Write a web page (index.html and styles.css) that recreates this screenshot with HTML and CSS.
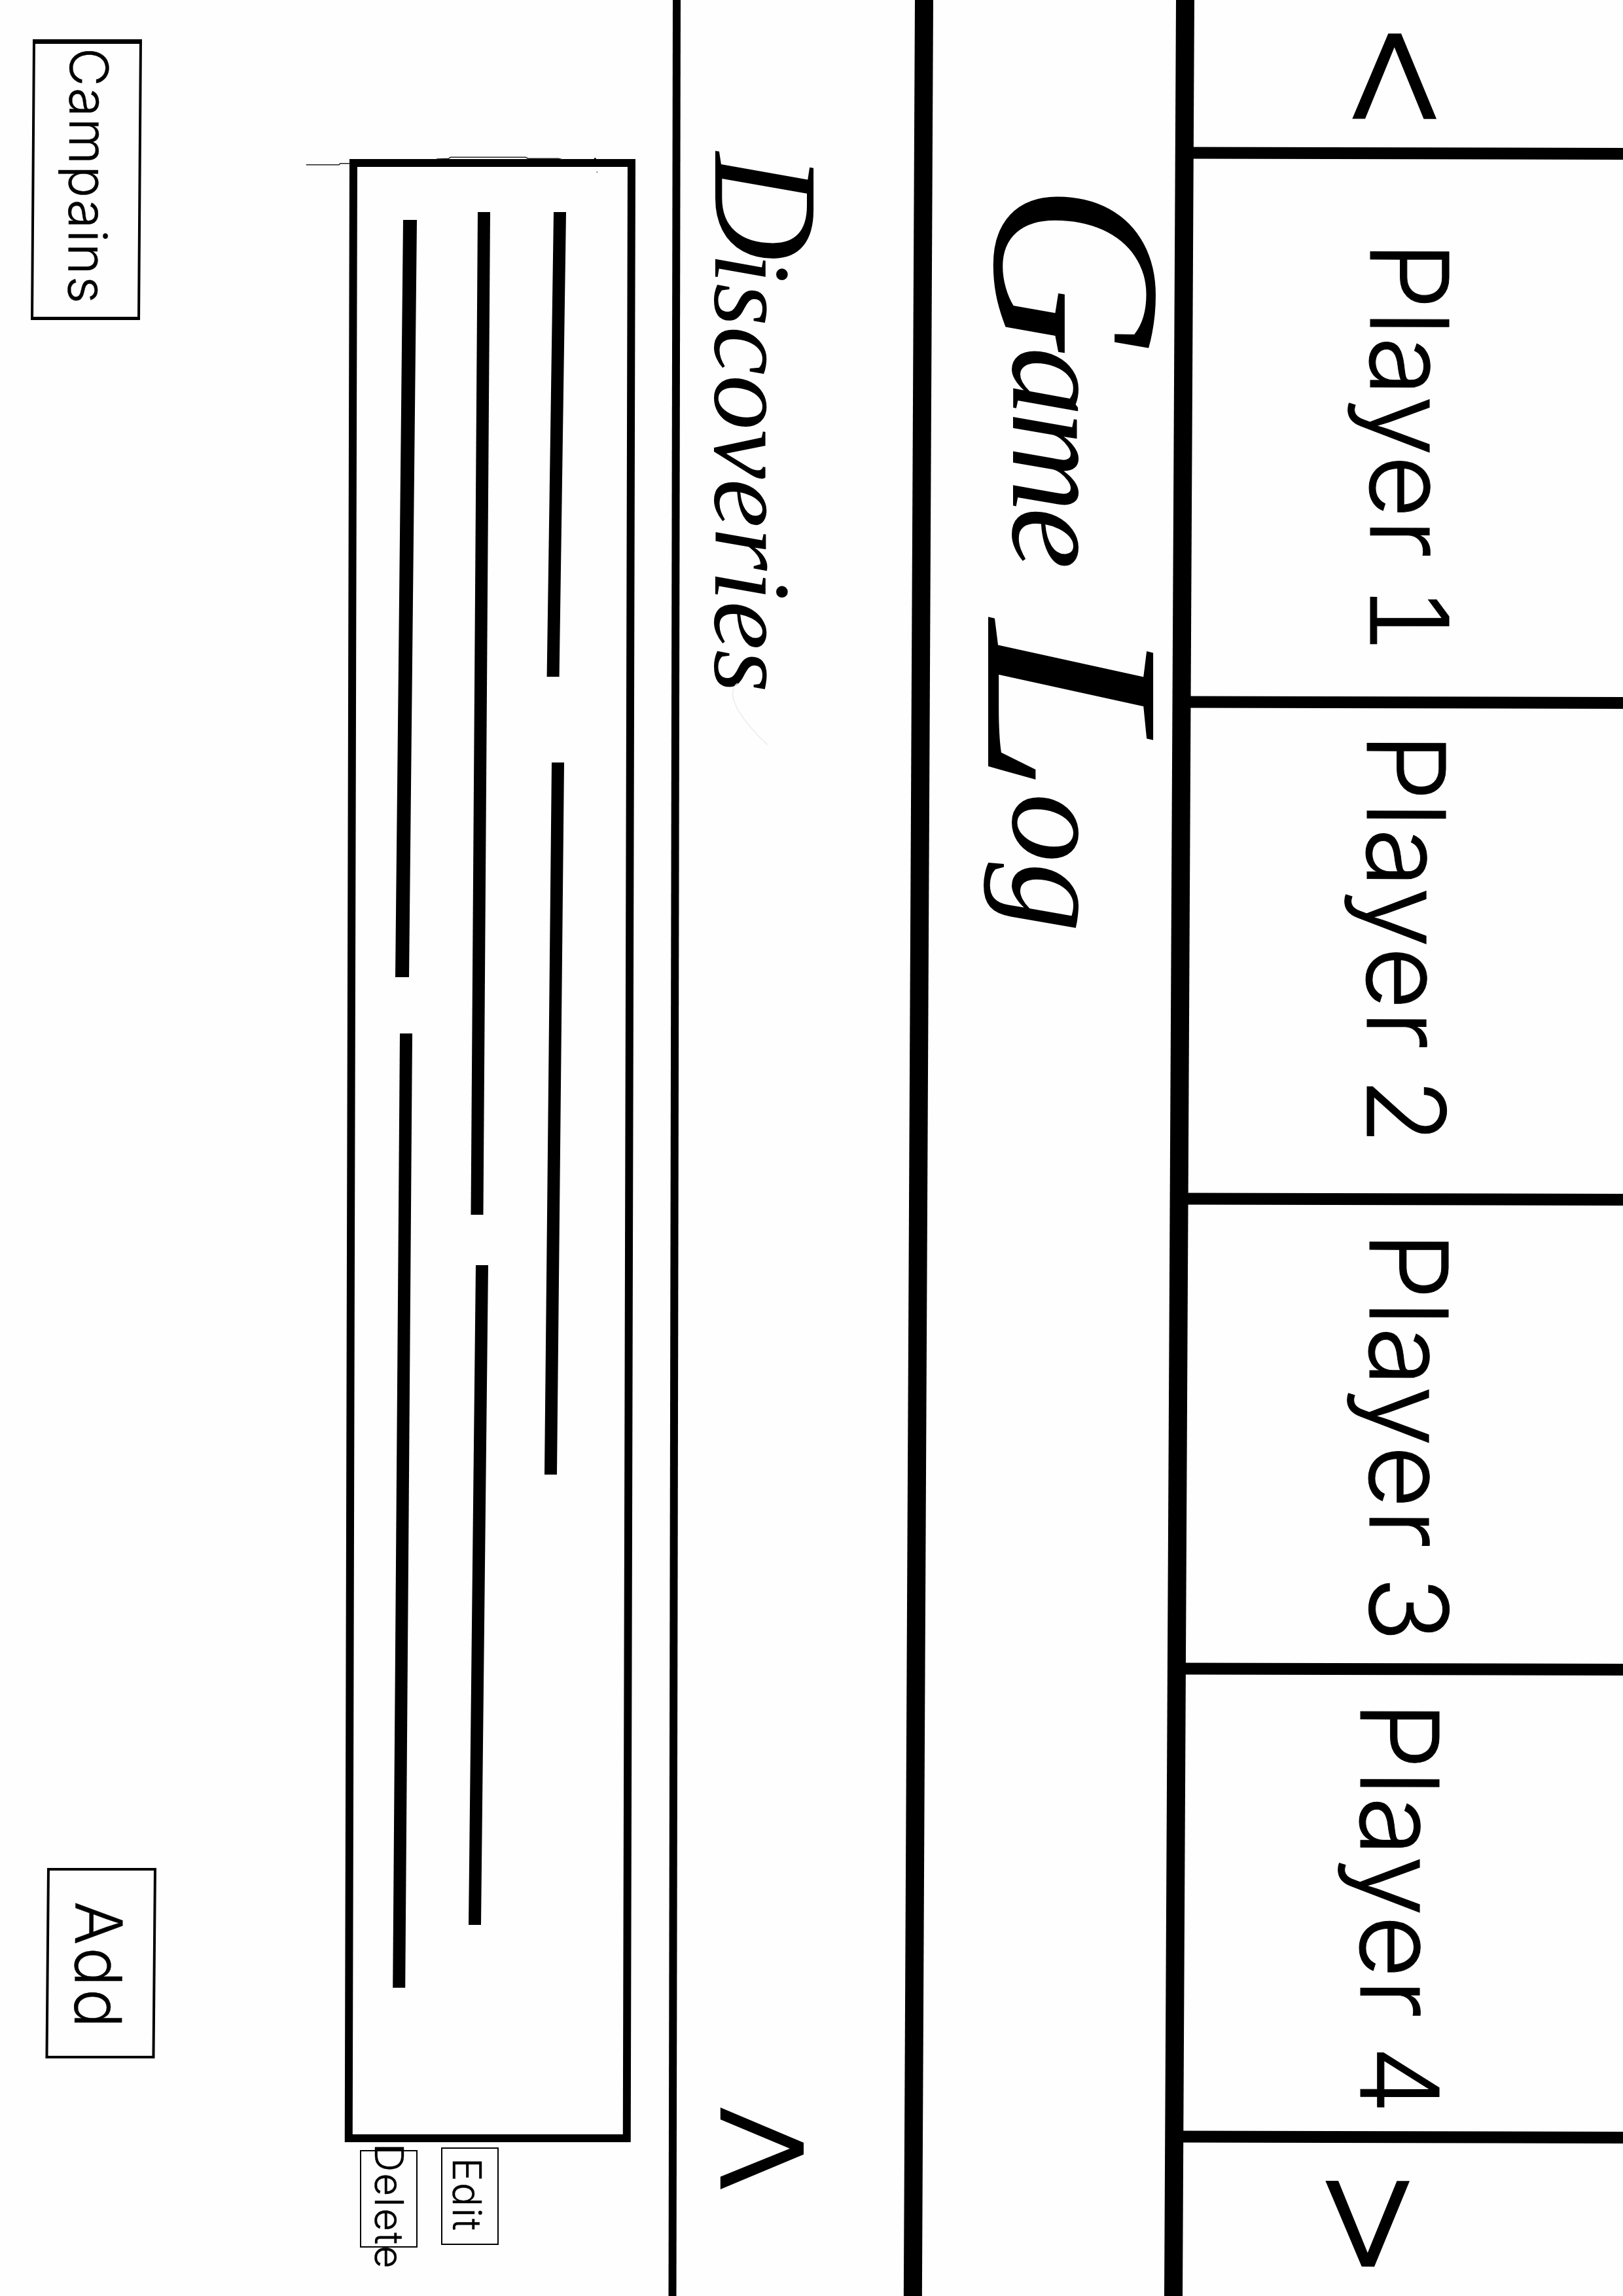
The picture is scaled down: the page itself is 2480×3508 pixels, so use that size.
FILE: index.html
```html
<!DOCTYPE html>
<html lang="en">
<head>
<meta charset="utf-8">
<title>Game Log</title>
<link rel="stylesheet" href="styles.css">
</head>
<body>
<div class="page">
<div class="sheet">
  <nav class="players">
    <div class="cell prev"><svg class="chevron" width="131" height="129" viewBox="0 0 131 129"><polygon points="0,54 130.5,0 130.5,19.5 21,64.3 130.5,109 130.5,128.7 0,73.7"/></svg></div>
    <div class="cell p1">Player 1</div>
    <div class="cell p2">Player 2</div>
    <div class="cell p3">Player 3</div>
    <div class="cell p4">Player 4</div>
    <div class="cell next"><svg class="chevron" width="131" height="129" viewBox="0 0 131 129"><polygon points="0,0 131,54 131,73.3 0,128.7 0,109 110,64.2 0,19.5"/></svg></div>
  </nav>
  <div class="rule rule-a"></div>
  <h1 class="title"><span class="word game"><span class="cap">G</span>ame</span><span class="word log"><span class="cap">L</span>og</span></h1>
  <div class="rule rule-b"></div>
  <section class="section-head">
    <h2 class="subtitle"><span class="cap">D</span>iscoveries</h2>
    <svg class="collapse" width="125" height="127.2" viewBox="0 0 125 127.2"><polygon points="53.7,0 71.7,0 125,127.2 105.7,127.2 62.7,21.1 18.3,127.2 0,127.2"/></svg>
    <svg class="smudge" width="110" height="70" viewBox="0 0 110 70"><path d="M10 48C20 62 50 60 104 2"/></svg>
  </section>
  <div class="rule rule-c"></div>
  <main class="content">
    <div class="entry">
      <svg class="scribble" width="30" height="437"><path d="M8.7 503.2V453L6.7 451.1V437M0 304L-.7 285.7L-2.7 282.7V167.9L-.7 164.1V117.7L.7 111.7"/><circle cx="-.5" cy="61.7" r="1.5"/><circle cx="20" cy="58.7" r=".8"/></svg>
      <div class="line"><i class="bar bar-1a"></i><i class="bar bar-1b"></i></div>
      <div class="line"><i class="bar bar-2a"></i><i class="bar bar-2b"></i></div>
      <div class="line"><i class="bar bar-3a"></i><i class="bar bar-3b"></i></div>
    </div>
    <aside class="actions">
      <div class="button edit">Edit</div>
      <div class="button delete">Delete</div>
    </aside>
  </main>
  <footer class="footer">
    <div class="button campaigns">Campains</div>
    <div class="button add">Add</div>
  </footer>
</div>
</div>
</body>
</html>
```
FILE: styles.css
```css
* { box-sizing: border-box; }
html, body { margin: 0; background: #fefefe; }
.page { width: 2480px; height: 3508px; overflow: hidden; }

/* Landscape sheet turned a quarter clockwise onto a portrait page */
.sheet {
  width: 3508px;
  height: 2480px;
  display: flex;
  flex-direction: column;
  overflow: hidden;
  transform: translateX(2480px) rotate(90deg);
  transform-origin: 0 0;
  color: #000;
  font-family: Inter, "Liberation Sans", sans-serif;
  font-weight: 300;
}
.sheet > * { flex: none; }

.players {
  display: grid;
  grid-template-columns: 243.6px 839px 759px 718.7px 714.5px 1fr;
  height: 675px;
  transform: skewX(-0.13deg);
  transform-origin: 0 0;
}
.cell {
  border-right: 18.3px solid #000;
  font-size: 165px;
  line-height: 165px;
  letter-spacing: 2px;
  word-spacing: -7px;
  font-feature-settings: "tnum";
  white-space: nowrap;
  -webkit-text-stroke: 1px #000;
}
.prev { padding: 285.3px 0 0 52px; }
.next { padding: 326.3px 0 0 58px; border-right: 0; }
.p1 { padding: 243.5px 0 0 126px; }
.p2 { padding: 248.5px 0 0 38px; }
.p3 { padding: 244.5px 0 0 41px; }
.p4 { padding: 258.5px 0 0 40px; }
svg { display: block; overflow: visible; }

.rule { background: #000; transform-origin: 0 0; }
.rule-a { height: 28.4px; margin-top: -19.9px; transform: skewY(0.294deg); }
.rule-b { height: 28.3px; transform: skewY(0.28deg); }
.rule-c { height: 12px; transform: skewY(0.106deg); }

.title, .subtitle {
  margin: 0;
  font-family: "Liberation Serif", serif;
  font-style: italic;
  font-weight: 400;
  white-space: nowrap;
}
.cap { line-height: 0; }
.title {
  display: flex;
  height: 370px;
  padding-left: 280px;
  font-size: 212px;
  line-height: 354px;
}
.title .cap { font-size: 370px; vertical-align: -27px; }
.game { width: 668px; letter-spacing: -7px; }
.game .cap { letter-spacing: -17px; }
.log .cap {
  display: inline-block;
  width: 264px;
  font-size: 385px;
  vertical-align: -38px;
  transform: scaleX(1.24);
  transform-origin: 0 0;
}

.section-head { position: relative; display: flex; justify-content: space-between; height: 358.4px; padding: 100px 163px 0 233px; }
.subtitle { font-size: 168px; line-height: 297px; }
.subtitle .cap { font-size: 229px; letter-spacing: -12px; }
.collapse { margin-top: 70.1px; }
.smudge { position: absolute; left: 1034px; top: 223px; fill: none; stroke: #ececec; stroke-width: 1.5; }

.content { display: flex; height: 494px; padding: 57px 0 0 243px; }
.entry {
  position: relative;
  flex: none;
  display: grid;
  grid-template-rows: 115.9px 112.2px auto;
  width: 3030px;
  height: 437px;
  padding-top: 105.6px;
}
.entry::before {
  content: "";
  position: absolute;
  inset: 0;
  border: 12.6px solid #000;
  transform: skewY(0.137deg);
  transform-origin: 0 0;
}
.scribble { position: absolute; left: 0; top: 0; }
.scribble path { fill: none; stroke: #222; stroke-width: 1.6; }
.line { display: flex; align-items: flex-start; }
.bar { height: 18.6px; background: #000; transform-origin: 0 0; }
.bar-1a { width: 710px; margin-left: 81px; transform: skewY(0.84deg); }
.bar-1b { width: 1088px; margin: 3.4px 0 0 131.3px; transform: skewY(0.58deg); }
.bar-2a { width: 1532px; margin-left: 81px; transform: skewY(0.393deg); }
.bar-2b { width: 1008px; margin: 3.5px 0 0 77.3px; transform: skewY(0.625deg); }
.bar-3a { width: 1157.3px; height: 20.6px; margin-left: 92.7px; transform: skewY(0.594deg); }
.bar-3b { width: 1458px; margin: 7.3px 0 0 86px; transform: skewY(0.424deg); }

.actions { display: flex; flex-direction: column; gap: 35.7px; padding: 208.7px 0 0 8px; }
.button { border: 4.5px solid #000; white-space: nowrap; transform-origin: 0 0; -webkit-text-stroke: 0.4px #000; }
.edit, .delete { width: 149px; height: 88px; border-width: 2.3px; font-size: 60px; line-height: 60px; letter-spacing: 2.4px; }
.edit { padding: 16px 0 0 14px; }
.delete { margin-left: 4px; padding: 11px 0 0; text-indent: -12px; }

.footer { display: flex; justify-content: space-between; align-items: flex-start; margin-top: 294.7px; padding: 0 363.5px 0 60px; }
.campaigns {
  width: 428.5px;
  height: 167px;
  margin-top: 22px;
  padding: 37px 0 0 6px;
  border-width: 4.5px 5px 4.5px 7px;
  font-size: 81px;
  line-height: 81px;
  letter-spacing: 2px;
  transform: skewY(0.4deg);
}
.add { width: 290.7px; height: 167px; padding: 34px 0 0 47px; font-size: 99px; line-height: 99px; letter-spacing: 4px; transform: skewY(0.5deg); }
```
